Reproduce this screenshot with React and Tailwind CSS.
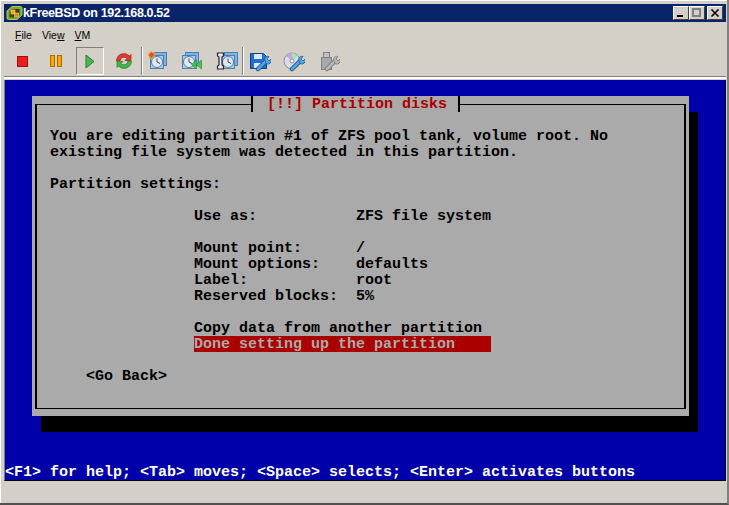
const mono = { fontFamily: '"Liberation Mono", monospace' };
const sans = { fontFamily: '"Liberation Sans", sans-serif' };

function VmwareLogo() {
  return (
    <svg width="17" height="16" viewBox="0 0 17 16" className="shrink-0">
      <path d="M6 1.500h8.500q1.500 0 1.500 1.500v7l-5 4.500H2.500Q1 14.500 1 13V6z" fill="#7fa52f" stroke="#a9c94a" />
      <path d="M6.500 4h7v6.500l-2.500 2H3.500V6.500z" fill="#37471f" />
      <rect x="5" y="5" width="4" height="4" fill="#e9a92a" stroke="#f7d36a" strokeWidth="0.6" />
      <rect x="8.500" y="8" width="4" height="4" fill="#d98f1c" stroke="#f7d36a" strokeWidth="0.6" />
    </svg>
  );
}

function Clock({ x = 3, y = 3 }) {
  return (
    <g>
      <rect x={x + 3.500} y={y - 0.500} width="13" height="13" fill="#7fb2dc" stroke="#4a80b4" />
      <rect x={x + 0.500} y={y + 2.500} width="13" height="13" fill="#a9cdea" stroke="#4a80b4" />
      <circle cx={x + 7} cy={y + 9} r="5.500" fill="#dfe9f3" stroke="#5c7f9f" />
      <path d={`M${x + 7} ${y + 5.500}v3.500l3 1.500`} fill="none" stroke="#445" />
    </g>
  );
}

function Wrench({ color = '#5aa5dc', dark = '#1d5a94' }) {
  return (
    <g>
      <path d="M9 19l8-8" stroke={dark} strokeWidth="4.500" strokeLinecap="round" />
      <path d="M9 19l8-8" stroke={color} strokeWidth="2.500" strokeLinecap="round" />
      <path d="M15.500 9a3.500 3.500 0 0 1 4.500-2.500l-2 2.500 2 2 2-2a3.500 3.500 0 0 1-5 4.500z" fill={color} stroke={dark} strokeWidth="0.800" />
    </g>
  );
}

function Ico({ children }) {
  return (
    <svg width="22" height="22" viewBox="0 0 22 22">
      {children}
    </svg>
  );
}

function ToolBtn({ children, className = '' }) {
  return <div className={`h-[28px] flex items-center justify-center shrink-0 ${className}`}>{children}</div>;
}

function Sep() {
  return <div className="w-[2px] h-[28px] shrink-0 bg-[#808080] border-r border-white" />;
}

function CaptionBtn({ children, className = '' }) {
  return (
    <div className={`w-[16px] h-[14px] bg-[#d4d0c8] border border-t-white border-l-white border-r-[#404040] border-b-[#404040] relative ${className}`}>
      {children}
    </div>
  );
}

function Row({ text }) {
  return <div className="h-[16px] pt-[1px] whitespace-pre">{text || ' '}</div>;
}

export default function App() {
  return (
    <div className="w-[729px] h-[505px] bg-[#d4d0c8] border-r-2 border-b-2 border-r-[#808080] border-b-[#505050] overflow-hidden">
      <div className="h-full border-t border-l border-white flex flex-col pt-[3px] pl-[3px] pr-[1px]">
        {/* Title bar */}
        <div className="h-[18px] bg-[#0a246a] flex items-center pl-[2px] pr-[3px] shrink-0">
          <VmwareLogo />
          <span className="text-white text-[12.500px] tracking-[-0.35px] font-bold leading-none flex-1 whitespace-nowrap" style={sans}>
            kFreeBSD on 192.168.0.52
          </span>
          <div className="flex items-center">
            <CaptionBtn>
              <div className="absolute left-[3px] bottom-[2px] w-[6px] h-[2px] bg-black" />
            </CaptionBtn>
            <CaptionBtn>
              <div className="absolute left-[2px] top-[1px] w-[9px] h-[9px] border-2 border-[#808080]" />
            </CaptionBtn>
            <CaptionBtn className="ml-[2px]">
              <svg width="14" height="12" viewBox="0 0 14 12" className="absolute left-0 top-0">
                <path d="M3.500 2.500l7 7M10.500 2.500l-7 7" stroke="#000" strokeWidth="1.700" />
              </svg>
            </CaptionBtn>
          </div>
        </div>

        {/* Menu bar */}
        <div className="h-[25px] pt-[3px] flex items-center gap-[10px] pl-[11px] text-[10.500px] text-black shrink-0" style={sans}>
          <span><u>F</u>ile</span>
          <span>Vie<u>w</u></span>
          <span><u>V</u>M</span>
        </div>

        {/* Toolbar */}
        <div className="h-[29px] flex items-start shrink-0">
          <ToolBtn className="w-[36px]">
            <div className="w-[11px] h-[11px] bg-[#ee1c1c] border border-[#a01010]" />
          </ToolBtn>
          <ToolBtn className="w-[32px]">
            <div className="flex gap-[2px]">
              <div className="w-[5px] h-[12px] bg-[#f5a800] border border-[#b06a00]" />
              <div className="w-[5px] h-[12px] bg-[#f5a800] border border-[#b06a00]" />
            </div>
          </ToolBtn>
          <ToolBtn className="w-[28px] ml-[4px] border border-t-[#808080] border-l-[#808080] border-r-white border-b-white">
            <svg width="10" height="15" viewBox="0 0 10 15">
              <path d="M1 1l8 6.500-8 6.500z" fill="#4cb84c" stroke="#1f7f2a" />
            </svg>
          </ToolBtn>
          <ToolBtn className="w-[37px] pl-[3px]">
            <Ico>
              <path d="M3.500 11a7.500 7.500 0 0 1 13-5l1.500-1.500v6h-6l2-2a4 4 0 0 0-7 2.500z" fill="#e63a2e" stroke="#a01818" strokeWidth="0.700" />
              <path d="M18.500 11a7.500 7.500 0 0 1-13 5L4 17.500v-6h6l-2 2a4 4 0 0 0 7-2.500z" fill="#45b548" stroke="#1f7f2a" strokeWidth="0.700" />
            </Ico>
          </ToolBtn>
          <Sep />
          <ToolBtn className="w-[29px]">
            <Ico>
              <Clock />
              <path d="M4.500 1l1 2 2-1-1 2 2 1-2 1 1 2-2-1-1 2-1-2-2 1 1-2-2-1 2-1-1-2 2 1z" fill="#f04a1a" stroke="#f5c030" strokeWidth="0.500" />
            </Ico>
          </ToolBtn>
          <ToolBtn className="w-[40px]">
            <Ico>
              <Clock x={1} />
              <path d="M15.500 10v9l-5-4.500zM20.500 10v9l-5-4.500z" fill="#4cc04c" stroke="#1f7f2a" strokeWidth="0.600" />
            </Ico>
          </ToolBtn>
          <ToolBtn className="w-[30px]">
            <Ico>
              <Clock x={5} />
              <path d="M1.500 3h6v3L6 7v8l1.500 1v3h-6v-3L3 15V7L1.500 6z" fill="#e8e8e8" stroke="#223" strokeWidth="1.200" />
            </Ico>
          </ToolBtn>
          <Sep />
          <ToolBtn className="w-[32px]">
            <Ico>
              <path d="M1.500 3.500h13l3 3v12h-16z" fill="#1f6fd6" stroke="#12408c" />
              <rect x="5" y="4" width="8" height="5" fill="#dfeaf8" />
              <rect x="5" y="13" width="8" height="5" fill="#dfeaf8" />
              <Wrench />
            </Ico>
          </ToolBtn>
          <ToolBtn className="w-[36px]">
            <Ico>
              <circle cx="9" cy="11" r="8" fill="#d8dde8" stroke="#8890a0" />
              <path d="M9 11 3 6a8 8 0 0 1 6-3z" fill="#c9a5e0" />
              <path d="M9 11V3a8 8 0 0 1 6 3z" fill="#a8e0b8" />
              <circle cx="9" cy="11" r="2" fill="#fff" stroke="#889" />
              <Wrench />
            </Ico>
          </ToolBtn>
          <ToolBtn className="w-[33px]">
            <Ico>
              <rect x="5.500" y="2.500" width="6" height="5" fill="#c0c0c0" stroke="#808080" />
              <rect x="3.500" y="7.500" width="10" height="12" fill="#a8a8a8" stroke="#808080" />
              <Wrench color="#b8b8b8" dark="#7a7a7a" />
            </Ico>
          </ToolBtn>
        </div>

        {/* Etched divider */}
        <div className="h-[4px] border-t border-[#808080] shrink-0">
          <div className="h-[2px] bg-white" />
        </div>

        {/* Console */}
        <div className="h-[401px] w-[722px] bg-[#0000aa] border-l border-l-[#808080] border-r border-r-black border-b border-b-black shrink-0 relative overflow-hidden text-[15px] font-bold leading-[16px]" style={mono}>
          <div className="mt-[16px] ml-[27px] w-[657px] h-[320px] bg-[#aaaaaa] shadow-[9px_16px_0_#000] relative text-black pt-[32px] pl-[18px]">
            <div className="absolute left-[3px] top-[8px] right-[3px] bottom-[7px] border-x-2 border-y border-black" />
            <div className="absolute left-[219px] top-0 w-[209px] h-[16px] pt-[1px] pl-[14px] bg-[#aaaaaa] border-x-2 border-black text-[#aa0000] whitespace-pre">
              [!!] Partition disks
            </div>
            <div className="relative">
              <Row text="You are editing partition #1 of ZFS pool tank, volume root. No" />
              <Row text="existing file system was detected in this partition." />
              <Row />
              <Row text="Partition settings:" />
              <Row />
              <Row text="                Use as:           ZFS file system" />
              <Row />
              <Row text="                Mount point:      /" />
              <Row text="                Mount options:    defaults" />
              <Row text="                Label:            root" />
              <Row text="                Reserved blocks:  5%" />
              <Row />
              <Row text="                Copy data from another partition" />
              <div className="h-[16px] pt-[1px] whitespace-pre ml-[144px] w-[297px] bg-[#aa0000] text-[#aaaaaa]">Done setting up the partition</div>
              <Row />
              <Row text="    <Go Back>" />
            </div>
          </div>
          <div className="absolute left-0 bottom-0 h-[16px] pt-[1px] text-white whitespace-pre">{'<F1> for help; <Tab> moves; <Space> selects; <Enter> activates buttons'}</div>
        </div>
      </div>
    </div>
  );
}
